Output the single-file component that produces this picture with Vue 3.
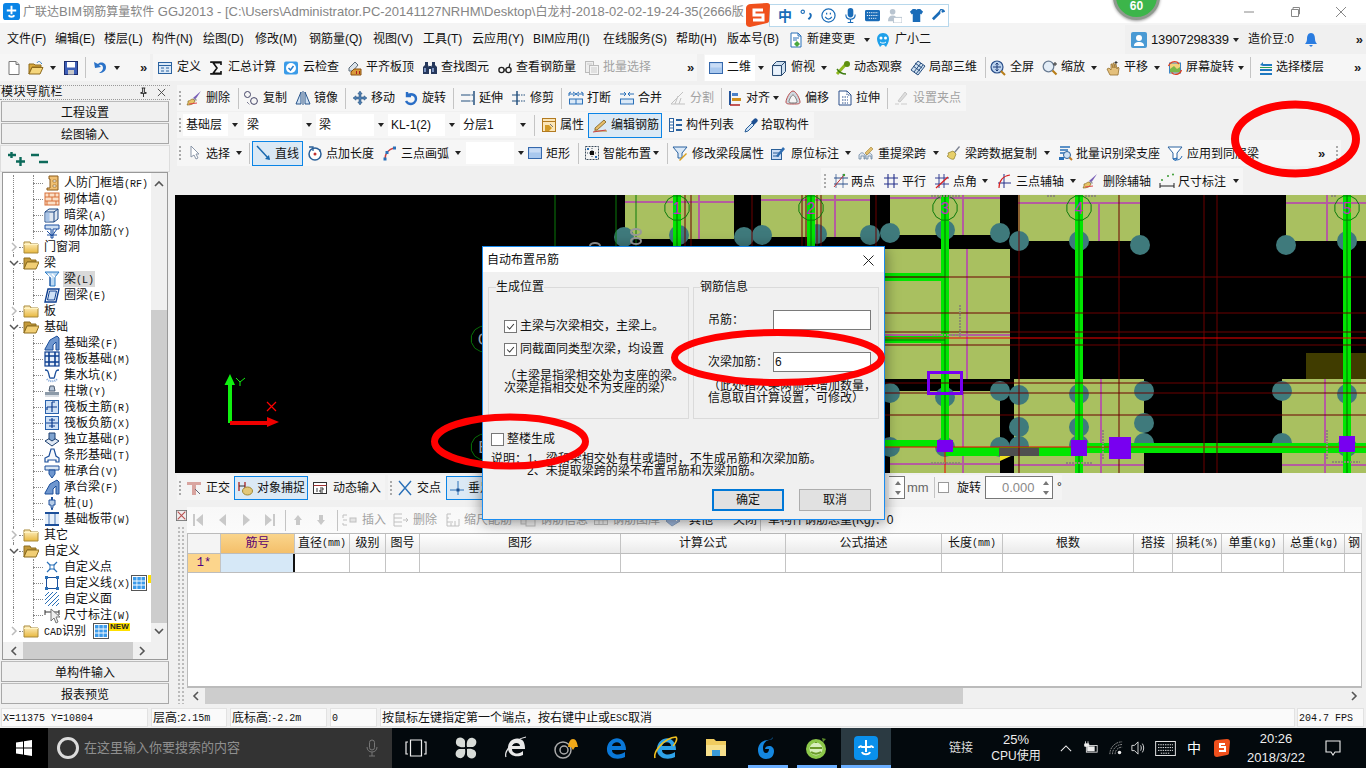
<script setup>
const I = {
  file: '<path d="M3 1.5h7l3 3v10H3z" fill="#fff" stroke="#777"/><path d="M10 1.5v3h3" fill="#ddd" stroke="#777"/>',
  open: '<path d="M1 4h5l1 1h6v2H4l-3 7z" fill="#d8a83c" stroke="#8e6a1c"/><path d="M4 7.5h11l-3 6.5H1z" fill="#f5d67c" stroke="#8e6a1c"/><path d="M9 3c1-2 3-2 4 0l1 1" fill="none" stroke="#3a7fc0"/>',
  save: '<rect x="1.5" y="1.5" width="13" height="13" fill="#3d5fb8" stroke="#1d2c6c"/><rect x="4" y="2" width="8" height="5.5" fill="#fff"/><rect x="5" y="10" width="6" height="4.5" fill="#c8c8c8"/>',
  undo: '<path d="M2 2l1 6 6-1-2-2c2-1 4 0 4 3 0 2-2 4-4 5 4 0 7-2 7-6 0-4-5-6-8-3z" fill="#2a72c8"/>',
  def: '<rect x="1.5" y="2.5" width="13" height="11" fill="#dbe9f7" stroke="#2a62a0"/><path d="M1.5 5.5h13M4 8h3M4 11h3M9 8h3M9 11h3" stroke="#2a62a0"/>',
  sigma: '<path d="M3 3V2h10v3M12.5 2.6H5l4 5.4-4 5.4h7.5M13 11v3H3v-1" fill="none" stroke="#111" stroke-width="1.6"/>',
  cloud: '<rect x="1" y="1.5" width="14" height="13" rx="2" fill="#3a9be8"/><circle cx="8" cy="8" r="5" fill="#fff"/><path d="M5.5 8l2 2 3-4" stroke="#2a7fd0" fill="none" stroke-width="1.5"/>',
  level: '<path d="M2 8l6-6 3 3-5 6H2z" fill="#dbe3ea" stroke="#5a6a78"/><path d="M7 9h7v6H4v-3z" fill="#d99a3a" stroke="#8a5010"/><path d="M9 11h1v3H9zM12 11h1v3h-1z" fill="#b02020"/>',
  binoc: '<path d="M3 2h3v3l1 2v7H1V7l2-2zM10 2h3v3l2 2v7H9V7l1-2z" fill="#26385c"/><path d="M7 6h2v3H7z" fill="#26385c"/><rect x="2" y="8" width="2" height="4" fill="#7a92c0"/><rect x="10" y="8" width="2" height="4" fill="#7a92c0"/>',
  glass: '<circle cx="4.5" cy="10" r="2.6" fill="none" stroke="#222" stroke-width="1.4"/><circle cx="11.5" cy="10" r="2.6" fill="none" stroke="#222" stroke-width="1.4"/><path d="M7 10h2M12 7.5l1-4" stroke="#222" stroke-width="1.2"/>',
  batch: '<rect x="1.5" y="1.5" width="8" height="11" fill="#eee" stroke="#bbb"/><rect x="5.5" y="5.5" width="9" height="9" fill="#f4f4f4" stroke="#bbb"/><path d="M7 8h6M7 10h6M7 12h6M3 4h5" stroke="#ccc"/>',
  square: '<rect x="1.5" y="2.5" width="13" height="11" fill="#a9c8ee" stroke="#3568ac"/><rect x="2.5" y="3.5" width="11" height="4" fill="#c9dcf5"/>',
  box3d: '<path d="M1.5 5.5l4-4h9v10l-4 4h-9z" fill="#cfe0f0" stroke="#2a4a70"/><path d="M1.5 5.5h9v10M10.5 5.5l4-4" fill="none" stroke="#2a4a70"/><path d="M2.5 6.5h7v8h-7z" fill="#eaf2fb"/>',
  orbit: '<path d="M2 14L11 4" stroke="#8fb81f" stroke-width="3"/><circle cx="12" cy="4" r="3" fill="#5e8f10"/><path d="M2 9c2 3 5 5 9 5" fill="none" stroke="#3c7a10" stroke-width="1.4"/>',
  part3d: '<path d="M8 1l7 5-7 9-7-5z" fill="#cfe0f0" stroke="#2a5080"/><path d="M5 3l7 5M3 6l7 5M11 3L4 12M13 5l-7 9" stroke="#2a5080"/>',
  zoomfit: '<circle cx="7" cy="7" r="6" fill="#bcd3ee" stroke="#2a4f8a" stroke-width="1.2"/><path d="M7 3v8M3 7h8M5.5 4.5L7 3l1.5 1.5M5.5 9.5L7 11l1.5-1.5" fill="none" stroke="#1f3c78"/><path d="M11 11l4 4" stroke="#b77d18" stroke-width="2"/>',
  zoom: '<circle cx="6.5" cy="6.5" r="5.3" fill="#e3edf7" stroke="#6a7d94" stroke-width="1.3"/><path d="M10.5 10.5l4 4" stroke="#b77d18" stroke-width="2.2"/><path d="M13 2v4M11 4h4" stroke="#333"/>',
  pan: '<path d="M5 15l-3-6 2-1 2 2V4h1l1 4V3h1l1 5V4h1l1 5 1-2 1 1-1 7z" fill="#e4c07c" stroke="#94702e" stroke-width=".8"/><path d="M11 1v3M9.5 2.5h3" stroke="#333"/>',
  rotate: '<rect x="2.5" y="3" width="11" height="10" fill="#f2d27a" stroke="#3c86c6"/><path d="M3 9l4-3 3 3 3-2v5H3z" fill="#7ab648"/><path d="M1.5 6C3 2 7 1 10 2l2 2M14.5 10c-1 4-5 5-8 4l-2-1.5" fill="none" stroke="#e04020" stroke-width="1.3"/>',
  floors: '<path d="M2 5l3-3v2h9v2H5zM2 9h12v2H2zM2 13h12v2H2z" fill="#1e78c0"/><path d="M2 7.5h12" stroke="#2e9e50"/>',
  brush: '<path d="M15 1L7 8l2 2z" fill="#7a60b8"/><path d="M9 8l2 2-1 1-2-2z" fill="#999"/><path d="M2 11c2 0 3-2 5-2l2 2c-1 3-4 4-8 4l1-2z" fill="#e7c468" stroke="#866a22" stroke-width=".7"/><path d="M3 14l8-1" stroke="#e04848"/>',
  copy: '<circle cx="4.5" cy="4.5" r="3" fill="none" stroke="#446"/><circle cx="11" cy="11" r="3.4" fill="none" stroke="#446"/><path d="M4 12l3 3" stroke="#446" stroke-dasharray="1 1"/>',
  mirror: '<path d="M6 2v12H1zM10 2v12h5z" fill="#cfe1f3" stroke="#29548a"/><path d="M8 1v14" stroke="#29548a"/>',
  move: '<path d="M8 1l2.2 3H9v3h3V5.8L15 8l-3 2.2V9H9v3h1.2L8 15l-2.2-3H7V9H4v1.2L1 8l3-2.2V7h3V4H5.8z" fill="#4d7cae" stroke="#24507e" stroke-width=".5"/>',
  rot: '<path d="M4 2v4h4M4 6c3-3 9-2 9 3 0 3-3 5-5 5s-4-1-5-3" fill="none" stroke="#2a6ec6" stroke-width="2.4"/>',
  extend: '<path d="M14 1v14" stroke="#24507e" stroke-width="1.5"/><path d="M1 5h8M1 11h8" stroke="#24507e"/><path d="M9 5h4M9 11h4" stroke="#24507e" stroke-dasharray="1.5 1"/>',
  trim: '<path d="M6 1v14" stroke="#24507e" stroke-width="1.5"/><path d="M1 5h8M1 11h8" stroke="#24507e"/><path d="M10 5h5M10 11h5" stroke="#24507e" stroke-dasharray="1.5 1"/>',
  brk: '<path d="M1 6V3l2-1M15 6V3l-2-1M1 4h5M10 4h5M5 2l3 2-3 2M11 2L8 4l3 2" fill="none" stroke="#2a70b8"/><rect x="1.5" y="9" width="13" height="5" fill="#dbe9f7" stroke="#2a70b8"/><path d="M8 9v5" stroke="#2a70b8"/>',
  merge: '<path d="M1 4h6M15 4H9M5 2l2 2-2 2M11 2L9 4l2 2" fill="none" stroke="#2a70b8"/><rect x="1.5" y="9" width="13" height="5" fill="#dbe9f7" stroke="#2a70b8"/>',
  split: '<path d="M1 14l12-12M1 14h14M5 14l3-8M9 14l2-6" fill="none" stroke="#c2c2c2"/>',
  align: '<path d="M3 1v14" stroke="#24549a" stroke-width="2"/><path d="M5 3h6v3H5z" fill="#4a80c8"/><path d="M5 8h9v3H5z" fill="#d09020"/><path d="M3 15h10" stroke="#b02020" stroke-width="1.5"/>',
  offset: '<path d="M8 1c3 0 7 8 7 11 0 2-2 2-7 2s-7 0-7-2c0-3 4-11 7-11z" fill="#cfd8df" stroke="#b94a4a"/><path d="M8 5c1.5 0 4 5 4 6.5S10 13 8 13s-4 0-4-1.5S6.5 5 8 5z" fill="#f4f4f4" stroke="#777"/>',
  stretch: '<path d="M2 1h8l4 4v10H2z" fill="#fff" stroke="#2a4f8a"/><path d="M10 1v4h4M5 7h6M5 10h6M5 13h6" fill="none" stroke="#2a4f8a" stroke-dasharray="1.5 1"/>',
  grippt: '<path d="M2 14h4M8 14h6" stroke="#ccc"/><path d="M5 11l7-9 2 2-7 8z" fill="#ddd" stroke="#c8c8c8"/>',
  prop: '<rect x="1.5" y="1.5" width="13" height="13" fill="#fbe6b8" stroke="#b27a20"/><path d="M1.5 4.5h13" stroke="#b27a20"/><path d="M4 8h4l3 3-3 3H4z" fill="#d39b28"/><path d="M9 7l3 3" stroke="#777"/>',
  edit: '<path d="M2 14h13" stroke="#b48425"/><path d="M3 11l9-8 2 2-9 8H3z" fill="#e6be6c" stroke="#7a5a1a" stroke-width=".8"/><path d="M1 15l13-2" stroke="#c44"/>',
  list: '<rect x="1.5" y="1.5" width="4" height="13" fill="#fff" stroke="#2a62a0"/><rect x="8" y="2" width="6" height="2" fill="#2a62a0"/><rect x="8" y="7" width="6" height="2" fill="#2a62a0"/><rect x="8" y="12" width="6" height="2" fill="#2a62a0"/><path d="M2 5h3M2 8h3M2 11h3" stroke="#2a62a0"/>',
  pick: '<path d="M2 15l1-3 6-6 2 2-6 6z" fill="#cfe2f6" stroke="#2a5f98"/><path d="M8 5l3 3 3-3c1-1 1-2 0-3s-2-1-3 0z" fill="#1c4f92"/>',
  cursor: '<path d="M4 1v11l3-2 2 4 2-1-2-4h3z" fill="#fff" stroke="#8a96a8"/>',
  line: '<path d="M1 1l12 13" stroke="#1a6ab0" stroke-width="1.5"/><path d="M14 15l-5-1 4-4z" fill="#1a6ab0"/>',
  addlen: '<circle cx="8" cy="9" r="6" fill="#fff" stroke="#2a5f98" stroke-width="1.5"/><path d="M2 2h4v4" fill="none" stroke="#2a5f98" stroke-width="1.3"/><circle cx="8" cy="9" r="1.5" fill="#c03030"/><path d="M13 4v3" stroke="#2a5f98"/>',
  arc: '<path d="M3 14c0-6 4-10 9-11" fill="none" stroke="#c84040" stroke-width="1.5"/><rect x="1.5" y="12.5" width="3" height="3" fill="#2a70b8"/><rect x="3.5" y="6" width="3" height="3" fill="#2a70b8"/><rect x="11" y="1.5" width="3" height="3" fill="#2a70b8"/>',
  smart: '<rect x="1.5" y="1.5" width="13" height="13" fill="#f5f5f5" stroke="#3a4a5a" stroke-dasharray="2 1"/><path d="M8 3v10M3 8h10" stroke="#3a4a5a" stroke-dasharray="1 1"/><rect x="6" y="6" width="4" height="4" fill="#111"/><rect x="3" y="3" width="2" height="2" fill="#2a70b8"/><rect x="11" y="11" width="2" height="2" fill="#2a70b8"/>',
  modseg: '<path d="M1 2h14l-5 6v5H6V8z" fill="#dbe9f7" stroke="#2a62a0"/><path d="M7 15l7-7 1 1-7 7z" fill="#d9a020"/>',
  insitu: '<rect x="1.5" y="4.5" width="10" height="10" fill="#c9dcf5" stroke="#2a5f98"/><path d="M3 8h6M3 11h6" stroke="#2a5f98"/><path d="M6 11l7-9 2 2-7 8z" fill="#2f6db0"/>',
  respan: '<path d="M1 10c2-3 4-3 6 0v4H6v-3H3v3H1zM8 10c2-3 4-3 6 0v4h-1v-3h-3v3H8z" fill="#e0e7ef" stroke="#5a7a9a" stroke-width=".7"/><path d="M7 8l6-6 2 2-6 6z" fill="#e2c070" stroke="#a08030" stroke-width=".6"/>',
  broom: '<path d="M9 7l5-6 1 1-5 6z" fill="#7a8090"/><path d="M3 8l5-2 3 3-2 5c-2 1-5-1-7-3 1 0 2-1 1-3z" fill="#e7cf6a" stroke="#8a7a26" stroke-width=".7"/>',
  batchid: '<path d="M3 2h10M3 5h8M3 8h5" stroke="#2a70b8" stroke-width="1.4"/><circle cx="10" cy="10" r="3.5" fill="#cfe1f3" stroke="#2a5f98"/><path d="M12.5 12.5l2.5 2.5" stroke="#c07a20" stroke-width="2"/><path d="M2 12h5v3H2z" fill="#2a70b8"/>',
  apply: '<path d="M1 2h14l-5 6v6H6V8z" fill="#fff" stroke="#2a62a0"/><path d="M15 11c-1 3-3 4-6 4l1-2-4 1 3 2" fill="none" stroke="#2a70b8"/>',
  twopt: '<path d="M2 11h14M2 5h14" stroke="#2a4f8a"/><path d="M4 1v14M11 1v14" stroke="#2a4f8a" stroke-width=".7"/><path d="M2 14L12 2" stroke="#c03030"/><circle cx="12" cy="2" r="1.2" fill="#3a9a30"/>',
  para: '<path d="M1 5h14M1 11h14M5 1v14M11 1v14" stroke="#25308a" stroke-width="1.1"/>',
  angle: '<path d="M1 5h14M1 11h14M5 1v14M10 1v14" stroke="#25308a" stroke-width=".9"/><path d="M2 15L14 4" stroke="#d82020" stroke-width="1.3"/>',
  arc3: '<path d="M8 1v14M2 10h13" stroke="#25308a"/><path d="M3 15C3 8 7 3 14 2" fill="none" stroke="#d82020" stroke-width="1.2"/>',
  dim: '<path d="M1 10v5M15 10v5M1 13h14" stroke="#222"/><circle cx="3" cy="7" r="1" fill="#3a9a30"/><circle cx="9" cy="3" r="1" fill="#3a9a30"/><circle cx="14" cy="1.5" r="1" fill="#3a9a30"/>',
  ortho: '<path d="M1 2h14v3H10v10H6V5H1z" fill="#d9a5a0"/><path d="M9 9l5 5" stroke="#667"/>',
  snap: '<path d="M1 2v9M7 2v7" stroke="#b03030" stroke-width="1.4"/><path d="M1 6h6" stroke="#333"/><ellipse cx="9.5" cy="11" rx="5" ry="4" fill="#e3c878" stroke="#a08836"/>',
  dyn: '<rect x="1.5" y="2.5" width="13" height="11" fill="#fff" stroke="#333"/><path d="M1.5 5.5h13" stroke="#a03030"/><path d="M5 8v4M8 8h3v2H8v2h3" stroke="#333" fill="none"/>',
  cross: '<path d="M2 1l12 14M14 1L2 15" stroke="#2a70b8" stroke-width="1.4"/>',
  perp: '<path d="M1 10h14M9 1v14" stroke="#2a70b8"/><rect x="7.5" y="8.5" width="3" height="3" fill="#1a4f90"/>',
  first: '<path d="M3 2h2v12H3zM13 2v12L6 8z" fill="#c9c9c9"/>',
  prev: '<path d="M11 2v12L4 8z" fill="#c9c9c9"/>',
  next: '<path d="M5 2v12l7-6z" fill="#c9c9c9"/>',
  last: '<path d="M3 2v12l7-6zM11 2h2v12h-2z" fill="#c9c9c9"/>',
  up: '<path d="M8 3l4 5H10v5H6V8H4z" fill="#c9c9c9"/>',
  down: '<path d="M8 13l4-5H10V3H6v5H4z" fill="#c9c9c9"/>',
  ins: '<path d="M1 3h4M1 8h4M1 13h4M1 3v3M1 11v2" stroke="#c0c0c0" fill="none"/><rect x="8" y="6" width="6" height="4" fill="#e4e4e4" stroke="#c0c0c0"/>',
  del: '<path d="M1 2h8M1 6h8M1 10h8M1 14h8M1 2v12" stroke="#c0c0c0" fill="none"/><path d="M10 8h5M13 6l2 2-2 2" stroke="#c0c0c0" fill="none"/>',
  scale: '<path d="M2 2h4M2 6h2M2 10h6M2 14h12M2 2v12M6 14v-3M10 14V9M14 14V7" stroke="#c0c0c0" fill="none"/>',
  info: '<rect x="1" y="4" width="9" height="8" fill="#eee" stroke="#c0c0c0"/><rect x="6" y="6" width="9" height="8" fill="#f4f4f4" stroke="#c0c0c0"/>',
  lib: '<rect x="1.5" y="4.5" width="13" height="8" fill="#f4f4f4" stroke="#c0c0c0"/><path d="M1.5 8h13M6 4.5v8M10 4.5v8" stroke="#c0c0c0"/>',
  other: '<path d="M1 9l6-6 8 6-8 5z" fill="#9fb9de" stroke="#8aa2c4"/><path d="M9 6l3 3" stroke="#fff"/>',
  closex: '<rect x=".5" y=".5" width="12" height="12" fill="#f0ecec" stroke="#707070"/><path d="M2 2l9 9M11 2l-9 9" stroke="#b85050" stroke-width="1.3"/>',
  fwall: '<path d="M5 1h9v14H3v-2h3V4H5z" fill="#f0c074" stroke="#8a5a1a"/><path d="M9 5h3v2H9zM9 10h3v2H9z" fill="#fff" stroke="#8a5a1a" stroke-width=".6"/>',
  brick: '<rect x="1" y="2" width="14" height="12" fill="#fbe0c8" stroke="#d8703a"/><path d="M1 6h14M1 10h14M5 2v4M11 2v4M8 6v4M3 10v4M12 10v4" stroke="#d8703a"/>',
  hbeam: '<path d="M1 5l4-3h9v10l-4 3H1z" fill="#dfe7f1" stroke="#1c4682"/><path d="M10 5v10M1 5h9M10 5l4-3" fill="none" stroke="#1c4682"/><rect x="1.5" y="5.5" width="4" height="9" fill="#a8c4e8"/>',
  brein: '<path d="M1 2h14v4H9v9H7V6H1z" fill="#cfe0f3" stroke="#1c4fa0"/><path d="M3 8l5 5 5-7M3 12h10" fill="none" stroke="#1c4fa0"/>',
  beam: '<path d="M1 1h14l-4 5v9H6V6z" fill="#bcd9f2" stroke="#2a7ac4"/><path d="M4 3l4 4M8 3l3 3" stroke="#fff" stroke-width="1.4"/><path d="M6 15V6" stroke="#1c4f9a"/>',
  ring: '<path d="M4 2h11l-3 13H1z" fill="#fff" stroke="#0e3f90" stroke-width="1.4"/><path d="M5.5 4h7l-2 9H3.5z" fill="#cfe1f6" stroke="#0e3f90"/>',
  fbeam: '<path d="M1 14l5-9 7-4 2 2v12h-3V7l-3 3v5H1z" fill="#6f97cf" stroke="#1c4f9a"/>',
  raft: '<rect x="1" y="1" width="14" height="14" fill="#e8f0fa" stroke="#0e3f90" stroke-width="1.2"/><path d="M1 5h14M1 11h14M5 1v14M11 1v14" stroke="#0e3f90" stroke-width="1.6"/>',
  pit: '<path d="M1 3c3 0 3 1 4 5s1 3 3 3 2 1 3-3 1-5 4-5" fill="none" stroke="#1c4f9a" stroke-width="1.3"/><path d="M3 12c2 3 8 3 10 0" fill="none" stroke="#7aa2d8" stroke-dasharray="1 1" stroke-width="2"/>',
  pier: '<path d="M6 3h4l1 5H5z" fill="#b4c3d6" stroke="#4a5a70"/><rect x="1" y="9" width="14" height="3" fill="#8c9aa8"/><rect x="1" y="12" width="14" height="2" fill="#d9dee4"/>',
  rmain: '<rect x="1.5" y="1.5" width="13" height="13" fill="#cfe1f6" stroke="#2a62ac"/><path d="M3 8h10M8 3v10M8 3h3M3 8v3" fill="none" stroke="#0e3f90" stroke-width="1.2"/>',
  rneg: '<rect x="1.5" y="1.5" width="13" height="13" fill="#cfe1f6" stroke="#2a62ac"/><path d="M2 8h12M5 5h6M5 11h6M8 3v10" fill="none" stroke="#0e3f90" stroke-width="1.2"/>',
  indep: '<path d="M1 10l7-4 7 4-7 5z" fill="#dfe8f3" stroke="#1c3f70"/><path d="M5 2h6v6l-3 2-3-2z" fill="#7fa3cf" stroke="#1c3f70"/>',
  strip: '<path d="M1 15v-4l4-2 2-7h3l2 7 3 2v4h-3v-2H4v2z" fill="#f5f8fc" stroke="#1c4f9a" stroke-width="1.2"/>',
  cap: '<path d="M1 3h14v4H1z" fill="#dbe7f4" stroke="#1c4f9a"/><path d="M5 7h6v4l-3 4-3-4z" fill="#6f97cf" stroke="#1c4f9a"/>',
  pile: '<path d="M5 5h6v5H9v2l-1 3-1-3v-2H5z" fill="#b7cde8" stroke="#1c4f9a"/><path d="M7 2h2v3H7z" fill="#1c4f9a"/>',
  band: '<path d="M1 2h14M1 14h14" stroke="#1c4f9a" stroke-width="2"/><path d="M5 2v12M11 2v12" stroke="#1c4f9a" stroke-width="1.4"/><rect x="1" y="3" width="14" height="10" fill="#cfe1f6" opacity=".5"/>',
  fold: '<path d="M1 3h6l1 2h7v9H1z" fill="url(#fg)" stroke="#a98a3a"/><path d="M1 5.5h14" stroke="#fff3c0"/>',
  folo: '<path d="M1 3h6l1 2h5v2H4L1 14z" fill="#c49a3a" stroke="#8c6c20"/><path d="M4 7h12l-3 7H1z" fill="#f1ce74" stroke="#8c6c20"/>',
  xpt: '<path d="M3 3l10 10M13 3L3 13" stroke="#2a70b8" stroke-width="1.2"/><rect x="6" y="6" width="4" height="4" fill="#fff" stroke="#2a70b8"/>',
  xline: '<rect x="2.5" y="2.5" width="11" height="11" fill="#fff" stroke="#1c4f9a"/><rect x="1" y="1" width="3" height="3" fill="#2a70b8"/><rect x="12" y="1" width="3" height="3" fill="#2a70b8"/><rect x="1" y="12" width="3" height="3" fill="#2a70b8"/><rect x="12" y="12" width="3" height="3" fill="#2a70b8"/>',
  xface: '<path d="M1 13L13 1M1 9l8-8M1 5l4-4M4 15L15 4M8 15l7-7M12 15l3-3" stroke="#2a70b8"/>',
  xdim: '<path d="M1 3v5M15 3v5M1 5h14" stroke="#333"/>',
  tile: '<rect x=".5" y=".5" width="15" height="15" fill="#fff" stroke="#555"/><rect x="2" y="2" width="3.5" height="12" fill="#3c9bea"/><rect x="6.3" y="2" width="3.5" height="12" fill="#3c9bea"/><rect x="10.5" y="2" width="3.5" height="12" fill="#3c9bea"/><path d="M2 6h12M2 10h12" stroke="#fff"/>',
}

const G = '<defs><linearGradient id="fg" x1="0" y1="0" x2="0" y2="1"><stop offset="0" stop-color="#fff2c8"/><stop offset="1" stop-color="#e8b840"/></linearGradient></defs>'

/* toolbar data: [kind, x, ...]: i icon+label, b boxed button, a caret, s separator, m more, g grip, c combo, z spacer */
function strip(x0, x1, raw) {
  const items = raw.map((r, k) => {
    const next = raw[k + 1]
    const x = r[1]
    const end = next ? next[1] : x1
    const it = { kind: r[0], key: k, width: end - x }
    if (r[0] === 'i' || r[0] === 'b') {
      it.icon = r[2]; it.text = r[3]; it.gap = r[4] - x - (r[0] === 'b' ? r[6] + 16 : 16); it.gray = r[5] === 1
      if (r[0] === 'b') { it.boxW = r[5]; it.pad = r[6]; it.gray = false }
    }
    if (r[0] === 'c') { it.text = r[2]; it.boxW = r[3] }
    if (r[0] === 't') { it.text = r[2]; it.gray = r[3] === 1 }
    return it
  })
  const first = raw.length ? raw[0][1] - x0 : 0
  return { x0, x1, items, first }
}
function row(strips, origin = 0) {
  let p = origin
  return strips.map((s, k) => { const out = { ...s, key: k, left: s.x0 - p }; p = s.x1; return out })
}

const toolRow = row([
  strip(0, 150, [['i', 6, 'file', '', 22], ['i', 28, 'open', '', 46], ['a', 50], ['i', 63, 'save', '', 81], ['s', 85], ['i', 92, 'undo', '', 110], ['a', 114], ['m', 140]]),
  strip(153, 697, [['i', 157, 'def', '定义', 177], ['i', 208, 'sigma', '汇总计算', 228], ['i', 283, 'cloud', '云检查', 303], ['i', 347, 'level', '平齐板顶', 366], ['i', 422, 'binoc', '查找图元', 441], ['i', 497, 'glass', '查看钢筋量', 516], ['i', 584, 'batch', '批量选择', 603, 1], ['m', 687]]),
  strip(704, 1366, [['c2', 705], ['a', 758], ['i', 771, 'box3d', '俯视', 791], ['a', 821], ['i', 835, 'orbit', '动态观察', 854], ['i', 910, 'part3d', '局部三维', 929], ['s', 985], ['i', 990, 'zoomfit', '全屏', 1010], ['i', 1042, 'zoom', '缩放', 1061], ['a', 1091], ['i', 1105, 'pan', '平移', 1124], ['a', 1154], ['i', 1167, 'rotate', '屏幕旋转', 1186], ['a', 1238], ['s', 1250], ['i', 1258, 'floors', '选择楼层', 1276], ['m', 1354]]),
])
const r2 = row([strip(177, 966, [['g', 179], ['i', 186, 'brush', '删除', 206], ['s', 238], ['i', 243, 'copy', '复制', 263], ['i', 295, 'mirror', '镜像', 314], ['s', 345], ['i', 352, 'move', '移动', 371], ['i', 403, 'rot', '旋转', 422], ['s', 453], ['i', 460, 'extend', '延伸', 479], ['i', 511, 'trim', '修剪', 530], ['s', 561], ['i', 568, 'brk', '打断', 587], ['i', 619, 'merge', '合并', 638], ['i', 670, 'split', '分割', 690, 1], ['s', 721], ['i', 727, 'align', '对齐', 746], ['a', 773], ['i', 785, 'offset', '偏移', 805], ['i', 837, 'stretch', '拉伸', 856], ['s', 887], ['i', 893, 'grippt', '设置夹点', 913, 1]])], 170)
const r3 = row([strip(177, 814, [['g', 179], ['c', 183, '基础层', 45], ['c', 244, '梁', 58], ['c', 316, '梁', 58], ['c', 388, 'KL-1(2)', 57], ['c', 460, '分层1', 56], ['s', 534], ['i', 541, 'prop', '属性', 560], ['b', 588, 'edit', '编辑钢筋', 611, 74, 4], ['i', 668, 'list', '构件列表', 686], ['i', 743, 'pick', '拾取构件', 761]])], 170)
const r4 = row([strip(177, 1341, [['g', 179], ['i', 187, 'cursor', '选择', 206], ['a', 236], ['s', 249], ['b', 252, 'line', '直线', 275, 51, 4], ['i', 307, 'addlen', '点加长度', 326], ['i', 382, 'arc', '三点画弧', 401], ['a', 455], ['c', 466, '', 48], ['i', 527, 'square', '矩形', 546], ['s', 578], ['i', 584, 'smart', '智能布置', 603], ['a', 653], ['s', 667], ['i', 672, 'modseg', '修改梁段属性', 692], ['i', 770, 'insitu', '原位标注', 791], ['a', 845], ['i', 858, 'respan', '重提梁跨', 878], ['a', 933], ['i', 945, 'broom', '梁跨数据复制', 965], ['a', 1044], ['i', 1057, 'batchid', '批量识别梁支座', 1076], ['i', 1167, 'apply', '应用到同层梁', 1187], ['m', 1318], ['g', 1336]])], 170)
const r5 = row([strip(821, 1243, [['g', 824], ['i', 832, 'twopt', '两点', 851], ['i', 883, 'para', '平行', 902], ['i', 934, 'angle', '点角', 953], ['a', 982], ['i', 996, 'arc3', '三点辅轴', 1016], ['a', 1070], ['i', 1082, 'brush', '删除辅轴', 1103], ['i', 1159, 'dim', '尺寸标注', 1178], ['a', 1233]])], 170)
const r6 = row([
  strip(177, 385, [['g', 179], ['i', 186, 'ortho', '正交', 206], ['b', 234, 'snap', '对象捕捉', 257, 74, 4], ['i', 312, 'dyn', '动态输入', 333]]),
  strip(388, 1062, [['g', 390], ['i', 397, 'cross', '交点', 417], ['b', 446, 'perp', '垂足', 468, 60, 3], ['z', 886]]),
], 170)
const r7 = row([strip(187, 1362, [['i', 190, 'first', '', 208], ['i', 215, 'prev', '', 233], ['i', 238, 'next', '', 256], ['i', 262, 'last', '', 280], ['s', 285], ['i', 290, 'up', '', 308], ['i', 313, 'down', '', 331], ['s', 337], ['i', 342, 'ins', '插入', 362, 1], ['i', 393, 'del', '删除', 413, 1], ['i', 445, 'scale', '缩尺配筋', 464, 1], ['i', 520, 'info', '钢筋信息', 540, 1], ['i', 593, 'lib', '钢筋图库', 612, 1], ['i', 665, 'other', '其他', 689], ['t', 733, '关闭'], ['s', 760], ['t', 768, '单构件钢筋总重(Kg)：0']])], 187)

const menus = [['文件(F)', 7], ['编辑(E)', 55], ['楼层(L)', 104], ['构件(N)', 152], ['绘图(D)', 203], ['修改(M)', 255], ['钢筋量(Q)', 309], ['视图(V)', 373], ['工具(T)', 423], ['云应用(Y)', 472], ['BIM应用(I)', 533], ['在线服务(S)', 603], ['帮助(H)', 676], ['版本号(B)', 727]]
  .map((m, k, a) => ({ t: m[0], w: (a[k + 1] ? a[k + 1][1] : 788) - m[1] }))

const tree = [
  [2, '人防门框墙', '(RF)', 'fwall'], [2, '砌体墙', '(Q)', 'brick'], [2, '暗梁', '(A)', 'hbeam'], [2, '砌体加筋', '(Y)', 'brein'],
  [1, '门窗洞', '', 'fold'], [1, '梁', '', 'folo', 1], [2, '梁', '(L)', 'beam', 0, 1], [2, '圈梁', '(E)', 'ring'],
  [1, '板', '', 'fold'], [1, '基础', '', 'folo', 1], [2, '基础梁', '(F)', 'fbeam'], [2, '筏板基础', '(M)', 'raft'],
  [2, '集水坑', '(K)', 'pit'], [2, '柱墩', '(Y)', 'pier'], [2, '筏板主筋', '(R)', 'rmain'], [2, '筏板负筋', '(X)', 'rneg'],
  [2, '独立基础', '(P)', 'indep'], [2, '条形基础', '(T)', 'strip'], [2, '桩承台', '(V)', 'cap'], [2, '承台梁', '(F)', 'fbeam'],
  [2, '桩', '(U)', 'pile'], [2, '基础板带', '(W)', 'band'], [1, '其它', '', 'fold'], [1, '自定义', '', 'folo', 1],
  [2, '自定义点', '', 'xpt'], [2, '自定义线', '(X)', 'xline', 0, 0, 'tile'], [2, '自定义面', '', 'xface'], [2, '尺寸标注', '(W)', 'xdim'],
  [1, '识别', '', 'fold', 0, 0, 'tilenew', 'CAD'],
].map((r, k) => ({ key: k, lvl: r[0], name: r[1], code: r[2], icon: r[3], open: r[4], sel: r[5], extra: r[6], pre: r[7] }))

const cols = [
  ['', 33], ['筋号', 74], ['直径', 55, '(mm)'], ['级别', 36], ['图号', 34], ['图形', 201], ['计算公式', 165], ['公式描述', 156],
  ['长度', 61, '(mm)'], ['根数', 131], ['搭接', 39], ['损耗', 49, '(%)'], ['单重', 62, '(kg)'], ['总重', 61, '(kg)'], ['钢', 18],
].map((c, k) => ({ key: k, t: c[0], w: c[1], m: c[2] }))
const gridCols = cols.map(c => c.w + 'px').join(' ')

/* drawing canvas: reference coordinates */
const olive = [[625, 195, 109, 44], [761, 195, 109, 42], [890, 195, 110, 40], [1018, 195, 122, 46], [1286, 195, 80, 46], [885, 249, 125, 130], [890, 391, 110, 82], [1014, 379, 130, 94], [1282, 379, 84, 94]]
const circles = [[624, 237], [679, 235], [744, 237], [762, 235], [817, 234], [870, 235], [890, 233], [945, 230], [1000, 233], [1019, 241], [1079, 241], [1140, 245], [1286, 245], [1347, 241], [890, 393], [945, 397], [1000, 391], [1019, 395], [1079, 394], [1144, 391], [1282, 391], [1347, 394], [1019, 427], [1079, 427], [1144, 423], [890, 447], [945, 447], [1000, 447], [1019, 446], [1079, 445], [1144, 443], [1282, 443], [1347, 447]]
const mag = [[625, 201, 109, 2], [761, 199, 109, 2], [890, 197, 110, 2], [1018, 202, 122, 2], [1286, 202, 80, 2], [698, 195, 2, 44], [834, 195, 2, 42], [962, 195, 2, 40], [1098, 202, 2, 39], [1326, 195, 2, 46], [966, 249, 2, 130], [962, 391, 2, 82], [1100, 379, 2, 94], [1324, 379, 2, 94], [890, 463, 110, 2], [1014, 464, 130, 2], [1282, 464, 84, 2], [885, 334, 125, 2]]
const greens = [[885, 273, 60, 8], [885, 336, 60, 7], [885, 440, 60, 7], [945, 447, 134, 9], [1083, 443, 283, 10], [673, 195, 8, 52], [807, 195, 8, 52], [941, 195, 8, 257], [1075, 195, 8, 278], [1343, 195, 8, 278]]
const darkV = [685, 691, 752, 802, 806, 817, 821, 876, 1019, 1119, 1204, 1217]
const darkH = [277, 313, 332, 345, 383, 393, 415]
const purple = [[937, 440, 16, 12], [1071, 440, 16, 16], [1109, 437, 22, 22], [1339, 436, 16, 16]]
const octs = [[677, 208, '1'], [811, 208, '2'], [945, 208, '3'], [1079, 208, '4'], [1347, 208, '5']]
function octagon(cx, cy, r) {
  const p = []
  for (let i = 0; i < 12; i++) { const a = i * Math.PI / 6 + 0.26; p.push((cx + r * Math.cos(a)).toFixed(1) + ',' + (cy + r * Math.sin(a)).toFixed(1)) }
  return p.join(' ')
}
const titleParts = ['广联达', 'BIM', '钢筋算量软件', ' GGJ2013 - [C:\\Users\\Administrator.PC-20141127NRHM\\Desktop\\', '白龙村', '-2018-02-02-19-24-35(2666', '版']
</script>

<template>
  <div class="app">
    <header class="title">
      <svg class="logo" viewBox="0 0 18 18"><rect width="18" height="18" rx="3" fill="#0a84e6"/><path d="M9 3v9M4 8h10M6 13c1 2 5 2 6 0" fill="none" stroke="#fff" stroke-width="2"/></svg>
      <span class="title-text"><span v-for="(p, k) in titleParts" :key="k" :class="{ tcjk: k % 2 === 0 }">{{ p }}</span></span>
      <div class="wins">
        <svg viewBox="0 0 12 12"><path d="M1 6h10" stroke="#888"/></svg>
        <svg viewBox="0 0 12 12"><path d="M2.5 3.5h7v7h-7zM4 3V1.5h6.5V8H10" fill="none" stroke="#888"/></svg>
        <svg viewBox="0 0 12 12"><path d="M1 1l10 10M11 1L1 11" stroke="#888"/></svg>
      </div>
    </header>

    <div class="menu">
      <span v-for="m in menus" :key="m.t" class="menu-item" :style="{ width: m.w + 'px' }">{{ m.t }}</span>
      <svg class="ic" viewBox="0 0 16 16"><path d="M3 1h7l3 3v11H3z" fill="#fff" stroke="#2a70b8"/><path d="M10 1v3h3M5 6h6M5 8h4" fill="none" stroke="#2a70b8"/><path d="M9 9l3 3-3 3-3-3z" fill="#4aa83c"/></svg>
      <span class="menu-item new-change">新建变更</span>
      <i class="caret caret-new"></i>
      <svg class="ic xiao" viewBox="0 0 16 16"><path d="M8 1c4 0 6 3 6 6s-2 6-3 8l-2-2H7l-2 2C4 13 2 10 2 7s2-6 6-6z" fill="#1ea0ea"/><circle cx="6" cy="6" r="1.5" fill="#fff"/><circle cx="10.5" cy="6" r="1.5" fill="#fff"/><path d="M5 10c2 1.5 4 1.5 6 0" stroke="#fff" fill="none"/></svg>
      <span class="menu-item xiao-text">广小二</span>
      <div class="menu-right">
        <svg class="ic" viewBox="0 0 16 16"><rect width="16" height="16" rx="2" fill="#4a9ad4"/><circle cx="8" cy="6" r="3" fill="#fff"/><path d="M3 14c0-3 2-4 5-4s5 1 5 4z" fill="#fff"/></svg>
        <span class="phone">13907298339</span>
        <i class="caret caret-phone"></i>
        <span class="bean">造价豆:0</span>
        <svg class="ic bell" viewBox="0 0 16 16"><path d="M8 1c3 0 4 3 4 6 0 2 1 4 2 5H2c1-1 2-3 2-5 0-3 1-6 4-6z" fill="#2a7ce0"/><path d="M6 13h4l-2 2z" fill="#2a7ce0"/></svg>
        <span class="more more-r">»</span>
      </div>
    </div>

    <div class="tb tb-top">
      <div v-for="s in toolRow" :key="s.key" class="strip" :style="{ marginLeft: s.left + 'px', width: s.x1 - s.x0 + 'px', paddingLeft: s.first + 'px' }">
        <template v-for="it in s.items" :key="it.key">
          <div v-if="it.kind === 'c2'" class="item" :style="{ width: it.width + 'px' }">
            <div class="twod">
              <svg class="ic" viewBox="0 0 16 16" v-html="I.square"></svg>
              <span class="lbl">二维</span>
            </div>
          </div>
          <div v-else-if="it.kind === 'i'" class="item" :style="{ width: it.width + 'px' }">
            <svg class="ic" viewBox="0 0 16 16" v-html="I[it.icon]"></svg>
            <span v-if="it.text" class="lbl" :class="{ gray: it.gray }" :style="{ marginLeft: it.gap + 'px' }">{{ it.text }}</span>
          </div>
          <div v-else-if="it.kind === 'a'" class="item" :style="{ width: it.width + 'px' }"><i class="caret"></i></div>
          <div v-else-if="it.kind === 's'" class="item" :style="{ width: it.width + 'px' }"><i class="sep"></i></div>
          <div v-else-if="it.kind === 'm'" class="item" :style="{ width: it.width + 'px' }"><span class="more">»</span></div>
        </template>
      </div>
    </div>

    <div class="work">
      <aside class="side">
        <div class="side-head">
          <span class="side-title">模块导航栏</span>
          <svg class="pin" viewBox="0 0 10 12"><path d="M3 1h4M4 1v5H2v1h6V6H6V1M5 7v4" fill="none" stroke="#222"/></svg>
          <svg class="pin" viewBox="0 0 10 10"><path d="M1 1l8 8M9 1L1 9" stroke="#444"/></svg>
        </div>
        <button class="side-btn">工程设置</button>
        <button class="side-btn">绘图输入</button>
        <div class="tree-bar">
          <svg class="plusminus" viewBox="0 0 17 15"><path d="M0 4h8M3.5 1v6M8 10.5h9M12.5 6v9" stroke="#0c6a5a" stroke-width="2.4" fill="none"/></svg>
          <svg class="plusminus" viewBox="0 0 17 15"><path d="M0 4h8M8 11h9" stroke="#0c6a5a" stroke-width="2.4" fill="none"/></svg>
        </div>
        <div class="tree-frame">
          <div class="tree-main">
            <div class="tree">
              <div v-for="r in tree" :key="r.key" class="node" :class="'lvl' + r.lvl">
                <i v-if="r.key < 28" class="vguide"></i>
                <i v-if="r.lvl === 2" class="vguide2"></i>
                <i class="hguide"></i>
                <svg v-if="r.lvl === 1" class="chev" viewBox="0 0 10 10">
                  <path v-if="r.open" d="M1 3l4 4 4-4" fill="none" stroke="#555" stroke-width="1.5"/>
                  <path v-else d="M3 1l4 4-4 4" fill="none" stroke="#bbb" stroke-width="1.5"/>
                </svg>
                <svg class="ic" viewBox="0 0 16 16" v-html="G + I[r.icon]"></svg>
                <span class="node-text" :class="{ sel: r.sel }"><span v-if="r.pre" class="code">{{ r.pre }}</span>{{ r.name }}<span v-if="r.code" class="code">{{ r.code }}</span></span>
                <svg v-if="r.extra" class="ic tile" viewBox="0 0 16 16" v-html="I.tile"></svg>
                <span v-if="r.extra === 'tilenew'" class="newb">NEW</span>
                <i v-else-if="r.extra" class="tiny"></i>
              </div>
              <svg class="pointer" viewBox="0 0 12 16"><path d="M1 1v12l3-3 2 5 2-1-2-5h4z" fill="#eee" stroke="#777"/></svg>
            </div>
            <div class="vscroll">
              <svg class="arr" viewBox="0 0 10 10"><path d="M1 7l4-4 4 4" fill="none" stroke="#555" stroke-width="1.6"/></svg>
              <div class="vthumb"></div>
              <svg class="arr" viewBox="0 0 10 10"><path d="M1 3l4 4 4-4" fill="none" stroke="#555" stroke-width="1.6"/></svg>
            </div>
          </div>
          <div class="hscroll">
            <svg class="arr" viewBox="0 0 10 10"><path d="M7 1L3 5l4 4" fill="none" stroke="#555" stroke-width="1.6"/></svg>
            <div class="hthumb"></div>
            <svg class="arr" viewBox="0 0 10 10"><path d="M3 1l4 4-4 4" fill="none" stroke="#555" stroke-width="1.6"/></svg>
          </div>
        </div>
        <button class="side-btn">单构件输入</button>
        <button class="side-btn">报表预览</button>
      </aside>

      <main class="main">
        <div v-for="(rowData, n) in [r2, r3, r4, r5]" :key="n" class="tb" :class="'tb-r' + n">
          <div v-for="s in rowData" :key="s.key" class="strip" :style="{ marginLeft: s.left + 'px', width: s.x1 - s.x0 + 'px', paddingLeft: s.first + 'px' }">
            <template v-for="it in s.items" :key="it.key">
              <div v-if="it.kind === 'i'" class="item" :style="{ width: it.width + 'px' }">
                <svg class="ic" viewBox="0 0 16 16" v-html="I[it.icon]"></svg>
                <span v-if="it.text" class="lbl" :class="{ gray: it.gray }" :style="{ marginLeft: it.gap + 'px' }">{{ it.text }}</span>
              </div>
              <div v-else-if="it.kind === 'b'" class="item" :style="{ width: it.width + 'px' }">
                <div class="boxed" :style="{ width: it.boxW + 'px', paddingLeft: it.pad - 1 + 'px' }">
                  <svg class="ic" viewBox="0 0 16 16" v-html="I[it.icon]"></svg>
                  <span class="lbl" :style="{ marginLeft: it.gap + 'px' }">{{ it.text }}</span>
                </div>
              </div>
              <div v-else-if="it.kind === 'c'" class="item" :style="{ width: it.width + 'px' }">
                <div class="combo" :style="{ width: it.boxW + 'px' }"><span class="lbl">{{ it.text }}</span></div>
                <i class="caret"></i>
              </div>
              <div v-else-if="it.kind === 'a'" class="item" :style="{ width: it.width + 'px' }"><i class="caret"></i></div>
              <div v-else-if="it.kind === 's'" class="item" :style="{ width: it.width + 'px' }"><i class="sep"></i></div>
              <div v-else-if="it.kind === 'm'" class="item" :style="{ width: it.width + 'px' }"><span class="more">»</span></div>
              <div v-else-if="it.kind === 'g'" class="item" :style="{ width: it.width + 'px' }"><i class="grip"></i></div>
            </template>
          </div>
        </div>

        <svg class="canvas" viewBox="175 195 1191 278">
          <rect v-for="(o, k) in olive" :key="'o' + k" :x="o[0]" :y="o[1]" :width="o[2]" :height="o[3]" fill="#a9c060"/>
          <rect x="1306" y="353" width="60" height="26" fill="#403c00"/>
          <rect v-for="(m, k) in mag" :key="'m' + k" :x="m[0]" :y="m[1]" :width="m[2]" :height="m[3]" fill="#b45ca0"/>
          <circle v-for="(c, k) in circles" :key="'c' + k" :cx="c[0]" :cy="c[1]" r="10" fill="#3f7a7c"/>
          <path d="M555 195v51M616 195v51M636 195v51" stroke="#0a7a0a"/>
          <rect v-for="(g, k) in greens" :key="'g' + k" :x="g[0]" :y="g[1]" :width="g[2]" :height="g[3]" fill="#00e600"/>
          <path d="M677 195v52M811 195v52M945 195v257M1079 195v278M1347 195v278M885 277h60M885 340h60" stroke="#006c00"/>
          <rect x="999" y="448" width="40" height="8" fill="#4f4f4f"/>
          <path d="M1000 456h11l-11 5z" fill="#f0e020"/>
          <path v-for="x in darkV" :key="'v' + x" :d="'M' + x + ' 195V473'" stroke="#6c0000" fill="none"/>
          <path v-for="y in darkH" :key="'h' + y" :d="'M885 ' + y + 'H1366'" stroke="#6c0000" fill="none"/>
          <path d="M885 338H1366M885 447H1366M945 447V473" stroke="#f00000" fill="none"/>
          <g v-for="o in octs" :key="'t' + o[2]">
            <polygon :points="octagon(o[0], o[1], 12.5)" fill="none" stroke="#0a7a0a"/>
            <text :x="o[0]" :y="o[1] + 6" class="axisnum">{{ o[2] }}</text>
          </g>
          <rect v-for="(p, k) in purple" :key="'p' + k" :x="p[0]" :y="p[1]" :width="p[2]" :height="p[3]" fill="#7800f0"/>
          <rect x="928.5" y="372.5" width="33" height="21" fill="none" stroke="#7800f0" stroke-width="3"/>
          <path d="M931 196h29M1047 196h8M1085 196h12M1331 196h5M960 305v32M932 335h28M931 463h29M1066 463h27M1103 430v30M1327 430v30M1332 462h28" stroke="#8c8c70" stroke-width="2" stroke-dasharray="2 1"/>
          <ellipse cx="636" cy="232" rx="5" ry="3" fill="none" stroke="#999" stroke-width="2"/>
          <ellipse cx="636" cy="241" rx="5" ry="3" fill="none" stroke="#999" stroke-width="2"/>
          <ellipse cx="595" cy="246" rx="5" ry="3" fill="none" stroke="#999" stroke-width="2"/>
          <polygon :points="octagon(484, 339, 13)" fill="none" stroke="#0a7a0a"/>
          <polygon :points="octagon(484, 447, 13)" fill="none" stroke="#0a7a0a"/>
          <text x="484" y="345" class="axisgray">C</text>
          <text x="484" y="453" class="axisgray">B</text>
          <path d="M228 423V385H224.5L230 374l5 11H232V423z" fill="#10f010"/>
          <path d="M230 421H267V417l12 5-12 5V425H230z" fill="#f00000"/>
          <path d="M236 378l4 4 5-4M240 382v4" stroke="#10f010" fill="none"/>
          <path d="M267 402l9 9M276 402l-9 9" stroke="#ff0000" stroke-width="1.2"/>
        </svg>

        <div class="tb tb-r6">
          <div v-for="s in r6" :key="s.key" class="strip" :style="{ marginLeft: s.left + 'px', width: s.x1 - s.x0 + 'px', paddingLeft: s.first + 'px' }">
            <template v-for="it in s.items" :key="it.key">
              <div v-if="it.kind === 'i'" class="item" :style="{ width: it.width + 'px' }">
                <svg class="ic" viewBox="0 0 16 16" v-html="I[it.icon]"></svg>
                <span class="lbl" :style="{ marginLeft: it.gap + 'px' }">{{ it.text }}</span>
              </div>
              <div v-else-if="it.kind === 'b'" class="item" :style="{ width: it.width + 'px' }">
                <div class="boxed" :style="{ width: it.boxW + 'px', paddingLeft: it.pad - 1 + 'px' }">
                  <svg class="ic" viewBox="0 0 16 16" v-html="I[it.icon]"></svg>
                  <span class="lbl" :style="{ marginLeft: it.gap + 'px' }">{{ it.text }}</span>
                </div>
              </div>
              <div v-else-if="it.kind === 'g'" class="item" :style="{ width: it.width + 'px' }"><i class="grip"></i></div>
            </template>
            <div v-if="s.key === 1" class="snap-right">
              <div class="spin spin-a"><i class="up"></i><i class="down"></i></div>
              <span class="mm">mm</span>
              <i class="sep sep-mm"></i>
              <i class="chk"></i>
              <span class="lbl rot-lbl">旋转</span>
              <div class="spin spin-b"><span>0.000</span><i class="up"></i><i class="down"></i></div>
              <span class="deg">°</span>
            </div>
          </div>
        </div>

        <div class="grid-zone">
          <div class="dock">
            <svg class="dock-x" viewBox="0 0 13 13" v-html="I.closex"></svg>
            <i class="dock-dots"></i>
          </div>
          <div class="grid-body">
            <div class="tb tb-r7">
              <div v-for="s in r7" :key="s.key" class="strip strip7" :style="{ width: s.x1 - s.x0 + 'px', paddingLeft: s.first + 'px' }">
                <template v-for="it in s.items" :key="it.key">
                  <div v-if="it.kind === 'i'" class="item" :style="{ width: it.width + 'px' }">
                    <svg class="ic" viewBox="0 0 16 16" v-html="I[it.icon]"></svg>
                    <span v-if="it.text" class="lbl" :class="{ gray: it.gray }" :style="{ marginLeft: it.gap + 'px' }">{{ it.text }}</span>
                  </div>
                  <div v-else-if="it.kind === 's'" class="item" :style="{ width: it.width + 'px' }"><i class="sep"></i></div>
                  <div v-else-if="it.kind === 't'" class="item" :style="{ width: it.width + 'px' }"><span class="lbl">{{ it.text }}</span></div>
                </template>
              </div>
            </div>
            <div class="table">
              <div class="thead" :style="{ gridTemplateColumns: gridCols }">
                <div v-for="c in cols" :key="c.key" class="th" :class="{ active: c.key === 1 }">{{ c.t }}<span v-if="c.m" class="code">{{ c.m }}</span></div>
              </div>
              <div class="trow" :style="{ gridTemplateColumns: gridCols }">
                <div v-for="c in cols" :key="c.key" class="td" :class="{ rownum: c.key === 0, cur: c.key === 1 }">{{ c.key === 0 ? '1*' : '' }}</div>
              </div>
            </div>
            <div class="gscroll">
              <svg class="arr" viewBox="0 0 10 10"><path d="M7 1L3 5l4 4" fill="none" stroke="#555" stroke-width="1.6"/></svg>
              <div class="gthumb"></div>
              <svg class="arr arr-end" viewBox="0 0 10 10"><path d="M3 1l4 4-4 4" fill="none" stroke="#555" stroke-width="1.6"/></svg>
            </div>
          </div>
        </div>
      </main>
    </div>

    <footer class="status">
      <span class="cell c1">X=11375 Y=10804</span>
      <span class="cell c2">层高:<span class="code">2.15m</span></span>
      <span class="cell c3">底标高:<span class="code">-2.2m</span></span>
      <span class="cell c4"><span class="code">0</span></span>
      <span class="cell c5">按鼠标左键指定第一个端点，按右键中止或<span class="code">ESC</span>取消</span>
      <span class="cell c6"><span class="code">204.7 FPS</span></span>
    </footer>

    <div class="taskbar">
      <div class="start"><svg viewBox="0 0 16 16"><path d="M0 2.5l7-1v6H0zM8 1.300L16 0v7.500H8zM0 8.500h7v6l-7-1zM8 8.500h8V16l-8-1.300z" fill="#fff"/></svg></div>
      <div class="search">
        <i class="cortana"></i>
        <span>在这里输入你要搜索的内容</span>
        <svg class="mic" viewBox="0 0 12 18"><rect x="3.5" y="1" width="5" height="10" rx="2.5" fill="none" stroke="#777"/><path d="M1 8c0 3 2 5 5 5s5-2 5-5M6 13v4M3 17h6" fill="none" stroke="#777"/></svg>
      </div>
      <div class="tasks">
        <div class="task"><svg viewBox="0 0 22 18"><path d="M5.5 1h11v16h-11zM3 3H1v12h2M19 3h2v12h-2" fill="none" stroke="#eee" stroke-width="1.2"/></svg></div>
        <div class="task"><svg viewBox="0 0 24 24"><path d="M11 11C6 12 1 10 2 5s8-4 9 0zM13 11c-1-5 1-10 6-9s4 8 0 9zM13 13c5-1 10 1 9 6s-8 4-9 0zM11 13c1 5-1 10-6 9s-4-8 0-9z" fill="#d8dcd8"/></svg></div>
        <div class="task"><svg viewBox="0 0 24 24"><path d="M21 13H8c0 5 7 6 11 2v4c-6 3-15 1-15-7S12 0 18 4c2 1 3 5 3 9zM8 10h8c0-4-7-4-8 0z" fill="#e8e8e8"/><path d="M2 21C0 16 8 4 22 1" fill="none" stroke="#e8e8e8" stroke-width="1.2"/></svg></div>
        <div class="task"><svg viewBox="0 0 24 24"><circle cx="9" cy="14" r="8" fill="none" stroke="#aaa" stroke-width="1.5"/><circle cx="10" cy="14" r="4" fill="none" stroke="#aaa" stroke-width="1.5"/><path d="M14 11c1-5 2-8 5-8s4 3 5 8H14zM17 11h4l-2 3z" fill="#f0a818"/></svg></div>
        <div class="task"><svg viewBox="0 0 24 24"><path d="M22 14H8c0 5 8 6 13 2v5c-8 4-19 1-18-9C4 3 14-1 19 5c2 2 3 6 3 9zM8 10h9c0-5-8-5-9 0z" fill="#0a78d8"/></svg></div>
        <div class="task"><svg viewBox="0 0 24 24"><path d="M22 14H8c0 5 8 6 13 2v5c-8 4-19 1-18-9C4 3 14-1 19 5c2 2 3 6 3 9zM8 10h9c0-5-8-5-9 0z" fill="#2ea2e8"/><path d="M1 22C-1 16 10 2 22 1c2 2-1 7-3 9" fill="none" stroke="#f0c020" stroke-width="1.6"/></svg></div>
        <div class="task"><svg viewBox="0 0 24 24"><path d="M2 3h8l2 2h10v6H2z" fill="#f0cc60"/><path d="M2 9h20v11H2z" fill="#f7e08c"/><rect x="8" y="14" width="8" height="6" fill="#3a9ad8"/></svg></div>
        <div class="task run"><svg viewBox="0 0 24 24"><path d="M19 1c-1 2-3 3-5 3C8 4 4 9 4 14s3 9 8 9 8-3 8-8c0-3-2-5-5-5-2 0-4 1-4 3h4c0 2-1 4-3 4s-3-2-3-5c0-4 2-7 6-8 2 0 4-1 4-3z" fill="#1487e0"/></svg></div>
        <div class="task run2"><svg viewBox="0 0 24 24"><circle cx="12" cy="13" r="10" fill="#8cc84a"/><circle cx="12" cy="13" r="6.5" fill="#d6eebc"/><path d="M6 12h12M7 16c3 2 7 2 10 0M12 6v1" stroke="#6a9a2a" stroke-width="2" fill="none"/><path d="M18 2l4 1-3 3" fill="#5a8a2a"/></svg></div>
        <div class="task active"><svg viewBox="0 0 24 24"><rect width="24" height="24" rx="4" fill="#0a90ec"/><path d="M12 4v12M5 12c0-2 2-2 3-1h8c1-1 3-1 3 1M8 16c1 3 7 3 8 0" fill="none" stroke="#fff" stroke-width="2"/></svg></div>
      </div>
      <span class="tray-link">链接</span>
      <div class="cpu"><span>25%</span><span class="cpu2">CPU使用</span></div>
      <div class="tray">
        <svg class="t1" viewBox="0 0 14 8"><path d="M1 7l6-6 6 6" fill="none" stroke="#eee" stroke-width="1.2"/></svg>
        <svg class="t2" viewBox="0 0 18 16"><rect x="4" y="5" width="13" height="8" fill="none" stroke="#eee"/><rect x="5" y="6" width="9" height="6" fill="#eee"/><path d="M3 0v3M6 0v3M2 3h5v3H2z" stroke="#eee" fill="#eee"/></svg>
        <svg class="t3" viewBox="0 0 16 16"><path d="M1 15a14 14 0 0 1 14-14M4 15a11 11 0 0 1 11-11M7 15a8 8 0 0 1 8-8" fill="none" stroke="#aaa" stroke-dasharray="2 1"/><circle cx="12" cy="13" r="2" fill="#eee"/></svg>
        <svg class="t4" viewBox="0 0 16 16"><path d="M1 5h3l4-4v14l-4-4H1zM11 5c1 2 1 4 0 6M13 3c2 3 2 7 0 10" fill="none" stroke="#eee"/></svg>
        <svg class="t5" viewBox="0 0 22 16"><rect x=".5" y=".5" width="21" height="15" fill="none" stroke="#eee"/><path d="M3 4h16M3 7h16M3 10h16M6 13h10" stroke="#eee" stroke-dasharray="1.5 1"/></svg>
        <span class="zh">中</span>
        <svg class="t7" viewBox="0 0 16 18"><path d="M3 1l10-1c2 0 3 1 3 3l-1 11c0 1-1 2-2 2L3 18c-2 0-3-1-3-3V4c0-2 1-3 3-3z" fill="#f0501c"/><path d="M11 5H6v3h5v4H5" fill="none" stroke="#fff" stroke-width="2"/></svg>
      </div>
      <div class="clock"><span>20:26</span><span>2018/3/22</span></div>
      <svg class="note" viewBox="0 0 16 16"><path d="M1 1h14v11H10l-2 3-2-3H1z" fill="none" stroke="#eee" stroke-width="1.1"/></svg>
    </div>

    <!-- floating: Sogou IME bar and the game badge -->
    <div class="badge"><span>60</span></div>
    <div class="sogou">
      <svg class="s-logo" viewBox="0 0 24 24"><path d="M5 1l16-1c2 0 3 1 3 3l-1 15c0 1-1 2-2 2L4 24c-2 0-4-1-4-3V5c0-2 2-4 5-4z" fill="#f0501c"/><path d="M17 7H8v5h9v5H7" fill="none" stroke="#fff" stroke-width="3"/></svg>
      <div class="s-bar">
        <span class="s-zh">中</span>
        <svg viewBox="0 0 16 16"><circle cx="4" cy="4" r="1.8" fill="none" stroke="#1a6cb8" stroke-width="1.2"/><path d="M11 6c2 0 2 2 1 4l-2 2" fill="none" stroke="#1a6cb8" stroke-width="2"/></svg>
        <svg viewBox="0 0 16 16"><circle cx="8" cy="8" r="7" fill="none" stroke="#1a6cb8" stroke-width="1.3"/><path d="M6 5v2M10 5v2M4.5 9.5c2 3 5 3 7 0" fill="none" stroke="#1a6cb8" stroke-width="1.3"/></svg>
        <svg viewBox="0 0 16 16"><rect x="5" y="0" width="6" height="10" rx="3" fill="#1a6cb8"/><path d="M3 7c0 3 2 5 5 5s5-2 5-5M8 12v3M5 15.5h6" fill="none" stroke="#1a6cb8" stroke-width="1.2"/></svg>
        <svg viewBox="0 0 16 16"><rect y="2" width="16" height="12" rx="1.5" fill="#1a6cb8"/><path d="M2 5h12M2 8h12M4 11h8" stroke="#fff" stroke-dasharray="1.3 1"/></svg>
        <svg viewBox="0 0 16 16"><circle cx="6" cy="4" r="3" fill="#b8c4d0"/><path d="M1 14c0-4 2-6 5-6s5 2 5 6z" fill="#b8c4d0"/><rect x="7" y="10" width="9" height="6" fill="#fff" stroke="#b8c4d0"/></svg>
        <svg viewBox="0 0 16 16"><path d="M4 1L1 4l2 3 1-1v9h8V6l1 1 2-3-3-3H9c0 1-2 1-2 0z" fill="#1a6cb8"/></svg>
        <svg viewBox="0 0 16 16"><path d="M11 1c3 0 4 2 4 3l-3 1-1-1 1-2-2 1 0 3-7 7-2-2 7-7 2-3z" fill="#1a6cb8"/></svg>
      </div>
    </div>

    <!-- dialog -->
    <section class="dialog">
      <div class="dlg-title">
        <span>自动布置吊筋</span>
        <svg viewBox="0 0 11 11"><path d="M.5.5l10 10M10.5.5l-10 10" stroke="#222"/></svg>
      </div>
      <div class="dlg-body">
        <div class="groups">
          <div class="group g1">
            <span class="legend">生成位置</span>
            <label class="chk-row first"><i class="chk on"><svg viewBox="0 0 13 13"><path d="M2.5 6.5l3 3 5-6" fill="none" stroke="#333" stroke-width="1.2"/></svg></i>主梁与次梁相交，主梁上。</label>
            <label class="chk-row"><i class="chk on"><svg viewBox="0 0 13 13"><path d="M2.5 6.5l3 3 5-6" fill="none" stroke="#333" stroke-width="1.2"/></svg></i>同截面同类型次梁，均设置</label>
            <p class="note-a">（主梁是指梁相交处为支座的梁。<br>次梁是指相交处不为支座的梁）</p>
          </div>
          <div class="group g2">
            <span class="legend">钢筋信息</span>
            <div class="field f1"><span>吊筋：</span><input class="inp" value="" readonly></div>
            <div class="field f2"><span>次梁加筋：</span><input class="inp" value="6" readonly></div>
            <p class="note-b">（此处指次梁两侧共增加数量，<br>信息取自计算设置，可修改）</p>
          </div>
        </div>
        <label class="chk-row whole"><i class="chk"></i>整楼生成</label>
        <p class="explain">说明：1、梁和梁相交处有柱或墙时，不生成吊筋和次梁加筋。<br><span class="indent">2、未提取梁跨的梁不布置吊筋和次梁加筋。</span></p>
        <div class="actions">
          <button class="btn primary">确定</button>
          <button class="btn">取消</button>
        </div>
      </div>
    </section>

    <!-- hand-drawn red marks on top of the screenshot -->
    <svg class="marks" viewBox="0 0 1366 768">
      <ellipse cx="1295.5" cy="139" rx="60.5" ry="34.5" fill="none" stroke="#f00" stroke-width="8"/>
      <ellipse cx="778" cy="357.5" rx="103.5" ry="25" fill="none" stroke="#f00" stroke-width="7"/>
      <ellipse cx="510" cy="441.5" rx="75.5" ry="24.5" fill="none" stroke="#f00" stroke-width="7"/>
    </svg>
  </div>
</template>

<style>
html, body { margin: 0; background: #f0f0f0; overflow: hidden; }
</style>

<style scoped>
* { box-sizing: border-box; }
.app {
  position: relative; width: 1366px; height: 768px; overflow: hidden; display: flex; flex-direction: column;
  background: #f0f0f0; color: #111; font: 12px/1.2 "Liberation Sans", "Noto Sans CJK SC", sans-serif;
}
.title { height: 23px; flex: none; display: flex; align-items: center; background: #fff; }
.logo { width: 17px; height: 17px; margin-left: 3px; }
.title-text { margin-left: 3px; font-size: 13px; color: #858585; white-space: nowrap; }
.tcjk { font-size: 12px; }
.wins { margin-left: auto; display: flex; gap: 34px; padding-right: 19px; }
.wins svg { width: 12px; height: 12px; }

.menu { height: 31px; flex: none; display: flex; align-items: center; padding: 2px 0 0 7px; background: #f4f4f4; }
.menu-item { white-space: nowrap; }
.new-change { margin-left: 3px; width: 57px; }
.caret { display: inline-block; width: 0; height: 0; border: 3px solid transparent; border-top: 4px solid #222; border-bottom: 0; flex: none; }
.caret-new { margin-right: 5px; }
.xiao { margin-right: 4px; }
.xiao-text { width: 60px; }
.menu-right { margin-left: 170px; flex: 1; align-self: stretch; display: flex; align-items: center; padding-left: 6px; background: #f0f0f0; }
.phone { margin-left: 4px; width: 78px; font-size: 13px; letter-spacing: -.15px; }
.caret-phone { margin-left: 4px; }
.bean { margin-left: 9px; width: 53px; font-size: 12px; white-space: nowrap; }
.bell { margin-left: 2px; }
.more { font: bold 13px/1 "Liberation Sans", sans-serif; color: #222; }
.more-r { margin-left: auto; margin-right: 3px; }

.tb { display: flex; flex: none; }
.tb-top { height: 30px; }
.tb-top .strip { height: 27px; }
.strip { display: flex; align-items: center; background: #f6f6f6; flex: none; }
.item { display: flex; align-items: center; flex: none; height: 100%; white-space: nowrap; }
.ic { width: 16px; height: 16px; flex: none; display: block; }
.lbl { white-space: nowrap; }
.gray { color: #a2a2a2; }
.sep { display: block; width: 1px; height: 21px; background: #c4c4c4; }
.grip { display: block; width: 2px; height: 14px; background: repeating-linear-gradient(#aaa 0 2px, transparent 2px 4px); }
.twod { display: flex; align-items: center; width: 50px; height: 26px; padding-left: 3px; gap: 3px; background: #fff; }
.combo { height: 22px; display: flex; align-items: center; background: #fff; padding-left: 3px; margin-right: 4px; }
.boxed { height: 25px; display: flex; align-items: center; border: 1px solid #0a84e6; background: #dbe9f5; }

.work { flex: 1; display: flex; min-height: 0; }
.side { width: 170px; flex: none; display: flex; flex-direction: column; padding-top: 1px; }
.side-head { height: 15px; flex: none; display: flex; align-items: center; padding: 0 4px 0 1px; border-top: 1px dotted #999; border-bottom: 1px dotted #999; }
.side-title { flex: 1; letter-spacing: .4px; }
.pin { width: 9px; height: 11px; margin-left: 9px; }
.side-btn { height: 21px; flex: none; margin: 1px 1px 0; padding: 3px 0 0; border: 1px solid #a8a8a8; border-top-color: #bbb; background: #f0f0f0; font: inherit; color: #111; }
.tree-bar { height: 27px; flex: none; margin-top: 1px; display: flex; align-items: center; padding: 0 0 0 7px; gap: 6px; background: #f4f4f4; border: 1px solid #ddd; }
.plusminus { width: 17px; height: 15px; }
.tree-frame { height: 488px; flex: none; margin: 0 2px; border: 1px solid #999; display: flex; flex-direction: column; background: #f0f0f0; }
.tree-main { flex: 1; display: flex; min-height: 0; }
.tree { position: relative; flex: 1; overflow: hidden; background: #fff; padding-top: 2px; }
.node { position: relative; height: 16px; display: flex; align-items: center; white-space: nowrap; }
.lvl2 { padding-left: 41px; }
.lvl1 { padding-left: 6px; }
.lvl1 .ic { margin-left: 4px; margin-right: 4px; }
.lvl2 .ic { margin-right: 3px; }
.chev { width: 10px; height: 10px; flex: none; position: relative; background: #fff; }
.vguide { position: absolute; left: 10px; top: 0; height: 16px; border-left: 1px dotted #888; }
.vguide2 { position: absolute; left: 30px; top: 0; height: 16px; border-left: 1px dotted #888; }
.hguide { position: absolute; left: 30px; top: 8px; width: 10px; border-top: 1px dotted #888; }
.lvl1 .hguide { left: 16px; width: 4px; }
.node-text { padding: 0 1px; line-height: 16px; }
.sel { background: #d9d9d9; }
.code { font: 10px/1 "Liberation Mono", monospace; }
.tile { margin-left: 0; margin-right: 0 !important; }
.lvl1 .tile { margin-left: 6px; margin-right: 0; }
.tiny { width: 3px; height: 8px; align-self: flex-start; margin-left: 1px; background: #ffe000; flex: none; }
.newb { align-self: flex-start; height: 8px; padding: 0 1px; background: #ffe000; font: bold 8px/8px "Liberation Sans", sans-serif; color: #222; }
.pointer { position: absolute; left: 47px; top: 435px; width: 12px; height: 16px; }
.vscroll { width: 16px; flex: none; display: flex; flex-direction: column; align-items: center; background: #f0f0f0; }
.arr { width: 10px; height: 10px; flex: none; }
.vscroll .arr:first-child { margin-top: 6px; }
.vscroll .arr:last-child { margin-top: 3px; }
.vthumb { width: 100%; height: 313px; margin-top: 121px; background: #cdcdcd; }
.hscroll { height: 17px; flex: none; display: flex; align-items: center; padding-left: 6px; background: #f0f0f0; }
.hthumb { width: 110px; height: 100%; margin: 0 4px; background: #cdcdcd; }

.main { flex: 1; display: flex; flex-direction: column; min-width: 0; }
.tb-r0 { height: 28px; padding-top: 1px; }
.tb-r0 .strip { height: 26px; }
.tb-r1, .tb-r2 { height: 28px; }
.tb-r3 { height: 27px; }
.tb-r1 .strip, .tb-r2 .strip, .tb-r3 .strip { height: 26px; }
.tb-r2 .lbl, .tb-r3 .lbl { padding-top: 2px; }
.canvas { width: 1191px; height: 278px; flex: none; margin-left: 5px; background: #000; display: block; }
.axisnum { font: 16px "Liberation Sans", sans-serif; fill: #c030c0; text-anchor: middle; }
.axisgray { font: 17px "Liberation Sans", sans-serif; fill: #bbb; text-anchor: middle; }
.tb-r6 { height: 32px; padding-top: 2px; }
.tb-r6 .strip { height: 25px; background: #f4f4f4; }
.tb-r6 .lbl { padding-top: 2px; }
.tb-r6 .boxed { height: 24px; }
.snap-right { margin-left: 3px; display: flex; align-items: center; flex: none; }
.spin { display: flex; flex-direction: column; align-items: flex-end; justify-content: center; gap: 6px; position: relative; background: #fff; border: 1px solid #777; height: 23px; padding-right: 3px; }
.spin-a { width: 16px; border-left: 0; }
.spin-b { width: 68px; }
.spin-b span { position: absolute; left: 16px; top: 3px; font-size: 13px; color: #8a8a8a; }
.up, .down { display: block; width: 0; height: 0; border: 3px solid transparent; }
.up { border-top: 0; border-bottom: 4px solid #777; }
.down { border-bottom: 0; border-top: 4px solid #777; }
.mm { margin-left: 2px; font-size: 13px; color: #666; width: 25px; }
.sep-mm { margin-left: 2px; }
.chk { display: flex; width: 11px; height: 11px; flex: none; border: 1px solid #999; background: #fff; }
.snap-right .chk { margin-left: 3px; }
.rot-lbl { margin-left: 8px; width: 28px; }
.deg { margin-left: 4px; }

.grid-zone { flex: 1; display: flex; min-height: 0; margin-left: 5px; }
.dock { width: 12px; flex: none; display: flex; flex-direction: column; align-items: center; }
.dock-x { width: 11px; height: 11px; margin-top: 5px; }
.dock-dots { width: 8px; flex: 1; margin-top: 5px; background: radial-gradient(circle, #bbb 1px, transparent 1.2px) 0 0 / 4px 4px; }
.grid-body { flex: 1; min-width: 0; display: flex; flex-direction: column; }
.tb-r7 { height: 28px; padding-top: 2px; }
.strip7 { height: 26px; background: linear-gradient(#f8f8f8, #fbfbfb); }
.table { height: 155px; flex: none; width: 1175px; background: #fff; border: 1px solid #bbb; border-bottom-width: 2px; overflow: hidden; }
.thead, .trow { display: grid; }
.thead { height: 20px; border-bottom: 1px solid #bdbdbd; }
.trow { height: 19px; border-bottom: 1px solid #bdbdbd; }
.th { display: flex; align-items: center; justify-content: center; white-space: nowrap; border-right: 1px solid #c4c4c4; background: linear-gradient(#fff, #eaeaea); overflow: hidden; }
.th:first-child { background: #f4f4f4; }
.th.active { background: linear-gradient(#fad58c, #f4bf6a); color: #5a0070; }
.td { border-right: 1px solid #c4c4c4; font: 12px/18px "Liberation Mono", monospace; text-align: center; }
.rownum { background: #fcd58c; color: #4b0082; }
.cur { background: #d6e8f7; border-right: 2px solid #111; }
.td:last-child, .th:last-child { border-right: 0; }
.gscroll { height: 16px; width: 1175px; flex: none; display: flex; align-items: center; padding-left: 4px; background: #f0f0f0; }
.gthumb { width: 758px; height: 100%; margin-left: 4px; background: #cdcdcd; }
.arr-end { margin-left: auto; margin-right: 3px; }

.status { height: 24px; flex: none; display: flex; align-items: stretch; padding: 4px 1px 1px; gap: 3px; }
.cell { display: flex; align-items: center; white-space: pre; padding: 2px 0 0 1px; background: #fafafa; border: 1px solid #e2e2e2; }
.c1 { width: 147px; font: 10px "Liberation Mono", monospace; }
.c2 { width: 76px; }
.c3 { width: 97px; }
.c4 { width: 47px; }
.c5 { width: 915px; }
.c6 { width: 67px; margin-left: -1px; }

.taskbar { height: 40px; flex: none; display: flex; align-items: center; background: #03090d; color: #eee; }
.start { width: 48px; height: 100%; flex: none; display: flex; align-items: center; justify-content: center; background: #000; }
.start svg { width: 16px; height: 16px; }
.search { width: 344px; height: 100%; flex: none; display: flex; align-items: center; background: #333; color: #8f8f8f; font-size: 13px; padding-left: 9px; }
.cortana { width: 22px; height: 22px; border-radius: 50%; border: 3px solid #dcdcdc; margin-right: 5px; flex: none; }
.mic { width: 12px; height: 18px; margin-left: auto; margin-right: 14px; }
.tasks { display: flex; height: 100%; flex: none; margin-left: -1px; }
.task { width: 50px; height: 100%; display: flex; align-items: center; justify-content: center; position: relative; flex: none; }
.task svg { width: 24px; height: 24px; }
.task:first-child svg { height: 18px; }
.task::after { content: ""; position: absolute; left: 0; right: 0; bottom: 0; height: 3px; }
.run::after { background: #6aaeff; left: 7px; right: 3px; }
.run2::after { background: #6aaeff; left: 6px; right: 4px; }
.active { background: #2b3a42; }
.active::after { background: #6aaeff; }
.tray-link { margin-left: 58px; width: 24px; font-size: 12px; color: #ddd; white-space: nowrap; flex: none; }
.cpu { margin-left: 18px; width: 50px; flex: none; display: flex; flex-direction: column; align-items: center; line-height: 16px; font-size: 13px; white-space: nowrap; }
.cpu2 { font-size: 12px; }
.tray { margin-left: 19px; display: flex; align-items: center; flex: none; }
.tray svg { width: 16px; height: 14px; flex: none; }
.tray .t1 { width: 12px; height: 7px; }
.tray .t2 { width: 15px; margin-left: 11px; }
.tray .t3 { width: 14px; margin-left: 11px; }
.tray .t4 { margin-left: 7px; }
.tray .t5 { width: 21px; height: 15px; margin-left: 9px; }
.zh { margin-left: 11px; width: 14px; font-size: 14px; color: #fff; white-space: nowrap; }
.tray .t7 { height: 18px; margin-left: 13px; }
.clock { margin-left: 14px; width: 64px; flex: none; display: flex; flex-direction: column; align-items: center; line-height: 19px; font-size: 13px; white-space: nowrap; }
.note { width: 16px; height: 16px; margin-left: 17px; flex: none; }

.badge { position: absolute; left: 1113px; top: -27px; width: 47px; height: 47px; border-radius: 50%; background: #3cb54a; border: 3px solid #8f9a8f; box-shadow: 0 1px 3px rgba(0,0,0,.4); display: flex; align-items: flex-end; justify-content: center; padding-bottom: 5px; color: #fff; font: bold 12px/1 "Liberation Sans", sans-serif; }
.sogou { position: absolute; left: 745px; top: 3px; display: flex; align-items: center; }
.s-logo { width: 26px; height: 24px; position: relative; z-index: 1; }
.s-bar { margin-left: -2px; width: 180px; height: 23px; display: flex; align-items: center; gap: 7px; padding-left: 8px; background: #fff; border: 1px solid #b8d8ec; }
.s-bar svg { width: 15px; height: 15px; }
.s-zh { font: bold 14px/1 "Noto Sans CJK SC", sans-serif; color: #1a6cb8; }

.dialog { position: absolute; left: 482px; top: 246px; width: 403px; height: 274px; border: 1px solid #1a8cf0; background: #f0f0f0; box-shadow: 0 2px 14px rgba(0,0,0,.45); display: flex; flex-direction: column; }
.dlg-title { height: 25px; flex: none; display: flex; align-items: center; justify-content: space-between; padding: 1px 10px 0 4px; background: #fff; }
.dlg-title svg { width: 11px; height: 11px; }
.dlg-body { flex: 1; padding: 15px 5px 0; }
.groups { display: flex; gap: 4px; }
.group { height: 132px; border: 1px solid #dadada; padding-left: 15px; display: flex; flex-direction: column; align-items: flex-start; }
.g1 { width: 201px; }
.g2 { width: 186px; padding-left: 14px; }
.legend { margin: -8px 0 0 -8px; height: 14px; line-height: 14px; background: #f0f0f0; }
.chk-row { display: flex; align-items: center; height: 13px; white-space: nowrap; }
.chk-row .chk { width: 13px; height: 13px; margin-right: 3px; border: 1px solid #777; }
.chk-row .chk svg { width: 11px; height: 11px; }
.first { margin-top: 26px; }
.first + .chk-row { margin-top: 10px; }
.note-a { margin: 14px 0 0; line-height: 12px; white-space: nowrap; }
.field { display: flex; align-items: center; height: 20px; width: 163px; justify-content: space-between; }
.f1 { margin-top: 16px; }
.f2 { margin-top: 22px; }
.inp { width: 98px; height: 20px; border: 1px solid #7a7a7a; padding: 0 1px; background: #fff; font: 12px "Liberation Sans", sans-serif; color: #111; outline: none; }
.note-b { margin: 8px 0 0; line-height: 12px; white-space: nowrap; }
.whole { margin: 14px 0 0 3px; }
.explain { margin: 7px 0 0 3px; line-height: 12px; white-space: nowrap; }
.indent { margin-left: 36px; }
.actions { display: flex; justify-content: flex-end; gap: 15px; margin-top: 12px; padding-right: 8px; }
.btn { width: 72px; height: 22px; padding: 0; border: 1px solid #adadad; background: #e1e1e1; font: inherit; color: #111; }
.primary { border: 2px solid #0078d7; }

.marks { position: absolute; inset: 0; width: 1366px; height: 768px; pointer-events: none; }
</style>
